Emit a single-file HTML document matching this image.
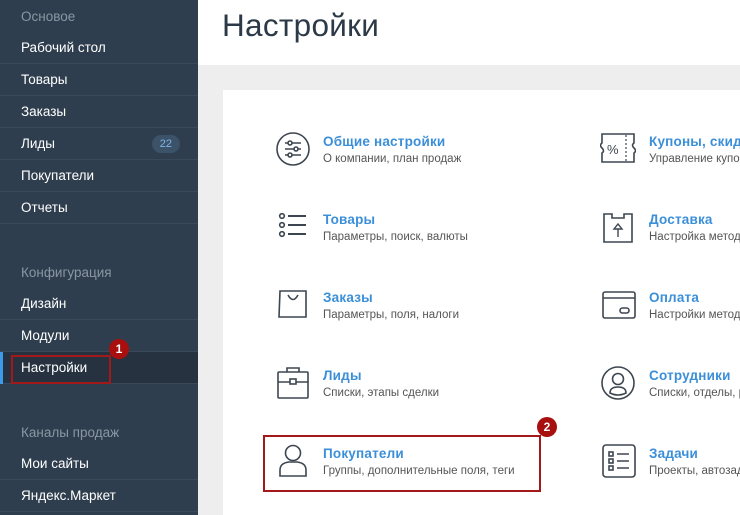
<!DOCTYPE html><html><head><meta charset="utf-8"><style>
*{margin:0;padding:0;box-sizing:border-box}
body{width:740px;height:515px;overflow:hidden;background:#eeeeee;font-family:"Liberation Sans","DejaVu Sans",sans-serif;position:relative}
.sb{position:absolute;left:0;top:0;width:198px;height:515px;background:#2f3e4e}
.hd{position:absolute;left:21px;font-size:13.5px;color:#8a96a3}
.it{position:absolute;left:0;width:198px;height:32px;border-bottom:1px solid #3a4959;color:#fff;font-size:13.5px;line-height:31px;padding-left:21px}
.badge{position:absolute;right:18px;top:7px;background:#3b5268;color:#7fb4e6;font-size:11px;line-height:18px;border-radius:9px;padding:0 8px}
.top{position:absolute;left:198px;top:0;width:542px;height:65px;background:#fff}
h1{position:absolute;left:222px;top:7px;font-size:31.5px;font-weight:normal;color:#2c3a48;letter-spacing:0.3px}
.card{position:absolute;left:223px;top:90px;width:517px;height:425px;background:#fff}
.e{position:absolute}
.e b{position:absolute;left:0;top:0;font-size:13.5px;color:#3b8fd9;white-space:nowrap;letter-spacing:0.2px}
.e span{position:absolute;left:0;top:19px;font-size:11.5px;color:#555;white-space:nowrap}
svg.i{position:absolute;fill:none;stroke:#3d4650;stroke-width:1.6}
.red{position:absolute;border:2px solid #a31818}
.num{position:absolute;width:20px;height:20px;border-radius:50%;background:#a80f0f;color:#fff;font-size:12px;font-weight:bold;text-align:center;line-height:20px}
</style></head><body>
<div class="sb">
<div class="hd" style="top:9px">Основое</div>
<div class="it" style="top:32px">Рабочий стол</div>
<div class="it" style="top:64px">Товары</div>
<div class="it" style="top:96px">Заказы</div>
<div class="it" style="top:128px">Лиды<span class="badge">22</span></div>
<div class="it" style="top:160px">Покупатели</div>
<div class="it" style="top:192px">Отчеты</div>
<div class="hd" style="top:265px">Конфигурация</div>
<div class="it" style="top:288px">Дизайн</div>
<div class="it" style="top:320px">Модули</div>
<div class="it" style="top:352px;background:#263240">Настройки</div>
<div style="position:absolute;left:0;top:352px;width:3px;height:32px;background:#3b9be8"></div>
<div class="hd" style="top:425px">Каналы продаж</div>
<div class="it" style="top:448px">Мои сайты</div>
<div class="it" style="top:480px">Яндекс.Маркет</div>
</div>
<div class="red" style="left:11px;top:355px;width:100px;height:29px"></div>
<div class="num" style="left:109px;top:339px">1</div>
<div class="top"></div>
<h1>Настройки</h1>
<div class="card"></div>

<svg class="i" style="left:275px;top:131px" width="36" height="36"><circle cx="18" cy="18" r="16"/><path d="M10 12h16M10 18h16M10 24h16"/><circle cx="15" cy="12" r="2" fill="#fff"/><circle cx="21" cy="18" r="2" fill="#fff"/><circle cx="15" cy="24" r="2" fill="#fff"/></svg>
<div class="e" style="left:323px;top:134px"><b>Общие настройки</b><span>О компании, план продаж</span></div>

<svg class="i" style="left:278px;top:212px" width="32" height="30"><circle cx="4" cy="4" r="2.3"/><circle cx="4" cy="13" r="2.3"/><circle cx="4" cy="22" r="2.3"/><path d="M10 4h18M10 13h18M10 22h18" stroke-width="2"/></svg>
<div class="e" style="left:323px;top:212px"><b>Товары</b><span>Параметры, поиск, валюты</span></div>

<svg class="i" style="left:277px;top:288px" width="32" height="34"><path d="M3 3h26v26H2z"/><path d="M11 7q5 9 10 0"/></svg>
<div class="e" style="left:323px;top:290px"><b>Заказы</b><span>Параметры, поля, налоги</span></div>

<svg class="i" style="left:276px;top:366px" width="36" height="34"><rect x="2" y="6" width="30" height="26" rx="1"/><path d="M11 6V2h12v4M2 16h30"/><rect x="14" y="13" width="6" height="5" fill="#fff"/></svg>
<div class="e" style="left:323px;top:368px"><b>Лиды</b><span>Списки, этапы сделки</span></div>

<svg class="i" style="left:277px;top:443px" width="34" height="36"><circle cx="16" cy="10" r="7.5"/><path d="M3 33v-6q0-7 9-8h8q9 1 9 8v6z"/></svg>
<div class="e" style="left:323px;top:446px"><b>Покупатели</b><span>Группы, дополнительные поля, теги</span></div>
<div class="red" style="left:263px;top:435px;width:278px;height:57px"></div>
<div class="num" style="left:537px;top:417px">2</div>

<svg class="i" style="left:600px;top:132px" width="36" height="34"><path d="M2 2h32v9q-3 2 0 5t0 5v9H2v-9q3-2 0-5t0-5z"/><path d="M26 3v26" stroke-dasharray="2 2" stroke-width="1.2"/><text x="7" y="22" font-size="13" fill="#3d4650" stroke="none" font-family="Liberation Sans">%</text></svg>
<div class="e" style="left:649px;top:134px"><b>Купоны, скидки</b><span>Управление купонами</span></div>

<svg class="i" style="left:602px;top:212px" width="34" height="32"><path d="M2 2h8v4h12V2h8v28H2z"/><path d="M16 25v-8h-4l4-5 4 5h-4" stroke-width="1.4"/></svg>
<div class="e" style="left:649px;top:212px"><b>Доставка</b><span>Настройка методов</span></div>

<svg class="i" style="left:601px;top:290px" width="36" height="30"><rect x="2" y="2" width="32" height="26" rx="2"/><path d="M2 8h32"/><rect x="19" y="18" width="9" height="5" rx="2.5"/></svg>
<div class="e" style="left:649px;top:290px"><b>Оплата</b><span>Настройки методов</span></div>

<svg class="i" style="left:600px;top:365px" width="36" height="36"><circle cx="18" cy="18" r="16"/><circle cx="18" cy="14" r="5.5"/><path d="M10 28q0-6 8-6t8 6q-8 4-16 0z"/></svg>
<div class="e" style="left:649px;top:368px"><b>Сотрудники</b><span>Списки, отделы, роли</span></div>

<svg class="i" style="left:601px;top:443px" width="36" height="36"><rect x="2" y="2" width="32" height="32" rx="3"/><rect x="8" y="9" width="4" height="4"/><rect x="8" y="16" width="4" height="4"/><rect x="8" y="23" width="4" height="4"/><path d="M16 11h12M16 18h12M16 25h12"/></svg>
<div class="e" style="left:649px;top:446px"><b>Задачи</b><span>Проекты, автозадачи</span></div>
</body></html>
